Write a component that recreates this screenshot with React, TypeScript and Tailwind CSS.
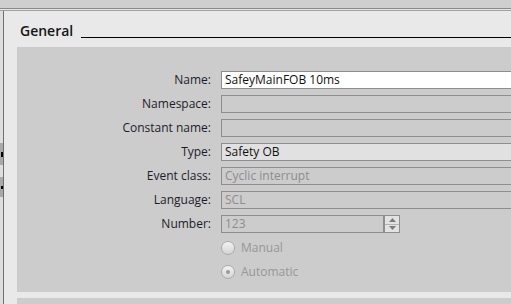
import React from "react";

type Field = {
  label: string;
  value?: string;
  kind: "edit" | "readonly" | "select" | "disabled";
};

const fields: Field[] = [
  { label: "Name:", value: "SafeyMainFOB 10ms", kind: "edit" },
  { label: "Namespace:", kind: "readonly" },
  { label: "Constant name:", kind: "readonly" },
  { label: "Type:", value: "Safety OB", kind: "select" },
  { label: "Event class:", value: "Cyclic interrupt", kind: "disabled" },
  { label: "Language:", value: "SCL", kind: "disabled" },
];

const boxStyle = {
  edit: "bg-white text-[#111]",
  readonly: "bg-[#cccccc] text-[#111]",
  select: "bg-[#e1e1e1] text-[#111]",
  disabled: "bg-[#cccccc] text-[#8d8d8d]",
};

const Label = ({ children }: { children: React.ReactNode }) => (
  <span className="w-[194px] shrink-0 text-right text-[#1c1c2a] whitespace-nowrap">{children}</span>
);

const Radio = ({ label, checked }: { label: string; checked?: boolean }) => (
  <div className="flex items-center h-[18px]">
    <span className="w-[194px] shrink-0" />
    <div className="ml-[10px] flex items-center -mt-[1px]">
      <span className="w-[14px] h-[14px] rounded-full border border-[#ababab] bg-gradient-to-b from-[#f3f3f3] to-[#d5d5d5] flex items-center justify-center">
        {checked && <span className="w-[4px] h-[4px] rounded-full bg-[#9a9a9a]" />}
      </span>
      <span className="ml-[6px] text-[#979797]">{label}</span>
    </div>
  </div>
);

export default function App() {
  return (
    <div className="w-[511px] h-[304px] overflow-hidden bg-[#e9e9e9] flex flex-col font-['Open_Sans',sans-serif] text-[12px]">
      <div className="h-[8px] shrink-0 bg-[#cfcfcf]" />
      <div className="h-px shrink-0 bg-[#8a8a8a]" />
      <div className="h-px shrink-0 bg-[#e4e4e4]" />
      <div className="h-px shrink-0 bg-[#a2a2a2]" />

      <div className="flex flex-1 min-h-0">
        {/* collapsed side tabs */}
        <div className="w-[3px] shrink-0 bg-[#dedede] flex flex-col pt-[132px] gap-[12px]">
          <div className="h-[22px] bg-[#a9a9a9] flex items-center justify-end">
            <span className="w-[2px] h-[5px] bg-black" />
          </div>
          <div className="h-[20px] bg-[#a9a9a9] flex items-center justify-end">
            <span className="w-[2px] h-[3px] bg-black" />
          </div>
        </div>
        <div className="w-px shrink-0 bg-[#6f6f6f]" />

        <div className="flex-1 min-w-0 flex flex-col pl-[13px]">
          <div className="h-[36px] shrink-0 flex items-start">
            <span className="ml-[3px] mt-[10px] text-[14px] leading-[19px] font-semibold text-[#161616]">General</span>
            <div className="flex-1 h-px bg-black mt-[26px] ml-[8px]" />
          </div>

          <div className="h-[245px] shrink-0 bg-[#cccccc] pt-[24px] flex flex-col gap-[6px]">
            {fields.map((f) => (
              <div key={f.label} className="flex items-center h-[18px]">
                <Label>{f.label}</Label>
                <div
                  className={`ml-[10px] w-[300px] shrink-0 h-[18px] border border-[#8e8e8e] px-[3px] leading-[16px] whitespace-nowrap ${boxStyle[f.kind]}`}
                >
                  {f.value}
                </div>
              </div>
            ))}

            <div className="flex items-center h-[18px]">
              <Label>Number:</Label>
              <div className="ml-[10px] w-[179px] shrink-0 h-[18px] border border-[#8e8e8e] flex">
                <span className="flex-1 px-[3px] leading-[16px] text-[#8d8d8d]">123</span>
                <div className="w-[16px] border-l-2 border-[#8e8e8e] bg-[#e2e2e2] flex flex-col">
                  <div className="flex-1 flex items-center justify-center">
                    <svg width="7" height="4" viewBox="0 0 7 4">
                      <path d="M3.5 0 L7 4 L0 4 Z" fill="#7c7c7c" />
                    </svg>
                  </div>
                  <div className="h-px bg-[#b4b4b4]" />
                  <div className="flex-1 flex items-center justify-center">
                    <svg width="7" height="4" viewBox="0 0 7 4">
                      <path d="M0 0 L7 0 L3.5 4 Z" fill="#7c7c7c" />
                    </svg>
                  </div>
                </div>
              </div>
            </div>

            <Radio label="Manual" />
            <Radio label="Automatic" checked />
          </div>

          <div className="h-[6px] shrink-0" />
          <div className="flex-1 bg-[#cccccc]" />
        </div>
      </div>
    </div>
  );
}
